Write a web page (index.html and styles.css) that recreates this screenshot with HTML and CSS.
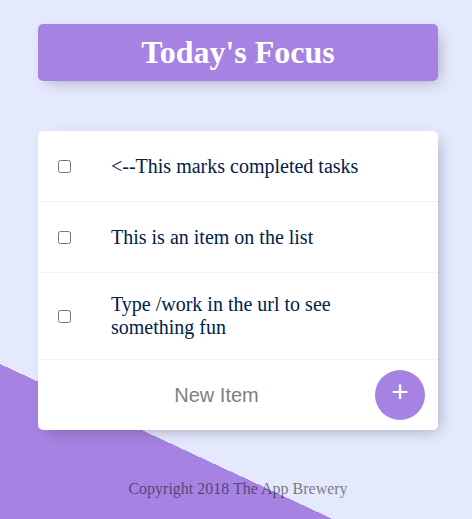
FILE: index.html
```html
<!DOCTYPE html>
<html lang="en">
<head>
<meta charset="utf-8">
<title>To Do List</title>
<link rel="stylesheet" href="styles.css">
</head>
<body>
  <div class="box heading">
    <h1>Today's Focus</h1>
  </div>
  <div class="box list">
    <div class="item">
      <input type="checkbox" class="check">
      <p class="text">&lt;--This marks completed tasks</p>
    </div>
    <div class="item">
      <input type="checkbox" class="check">
      <p class="text">This is an item on the list</p>
    </div>
    <div class="item">
      <input type="checkbox" class="check">
      <p class="text">Type /work in the url to see something fun</p>
    </div>
    <form class="item add-form" action="#">
      <input type="text" class="new-item" name="newItem" placeholder="New Item" autocomplete="off">
      <button type="button" class="add-btn">+</button>
    </form>
  </div>
  <footer class="footer">Copyright 2018 The App Brewery</footer>
</body>
</html>
```
FILE: styles.css
```css
html {
  background-color: #E4E9FD;
  background-image: linear-gradient(25deg, #A683E3 50%, #E4E9FD 50%);
  background-repeat: no-repeat;
  background-position: 0 0;
  background-size: 100% 948px;
}

body {
  margin: 0;
  padding: 24px 0 0 38px;
  font-family: "Liberation Serif", "Times New Roman", serif;
}

.box {
  width: 400px;
  background: #fff;
  border-radius: 5px;
  box-shadow: 5px 5px 15px -5px rgba(0, 0, 0, 0.3);
}

.heading {
  background-color: #A683E3;
  text-align: center;
  margin-bottom: 50px;
}

.heading h1 {
  margin: 0;
  padding: 10px;
  color: #fff;
  font-size: 32px;
  font-weight: bold;
}

.list {
  margin-bottom: 50px;
}

.item {
  min-height: 70px;
  display: flex;
  align-items: center;
  border-bottom: 1px solid #F1F1F1;
  margin: 0;
}

.item:last-child {
  border-bottom: 0;
}

.check {
  margin: 20px;
  width: 13px;
  height: 13px;
  flex: none;
}

.text {
  margin: 0;
  padding: 20px;
  font-size: 20px;
  color: #00204a;
}

.add-form {
  padding-left: 20px;
}

.new-item {
  width: 313px;
  height: 60px;
  padding: 0 2px;
  border: none;
  background: transparent;
  text-align: center;
  font-family: "Liberation Sans", Arial, sans-serif;
  font-size: 20px;
  outline: none;
}

.new-item::placeholder {
  color: grey;
  opacity: 1;
}

.add-btn {
  width: 50px;
  height: 50px;
  border-radius: 50%;
  border: 0;
  background-color: #A683E3;
  color: #fff;
  font-family: "Liberation Sans", Arial, sans-serif;
  font-size: 30px;
  padding: 0 0 6px 0;
  line-height: 1;
}

.footer {
  width: 400px;
  text-align: center;
  color: rgba(0, 0, 0, 0.5);
  font-size: 16px;
}
```
